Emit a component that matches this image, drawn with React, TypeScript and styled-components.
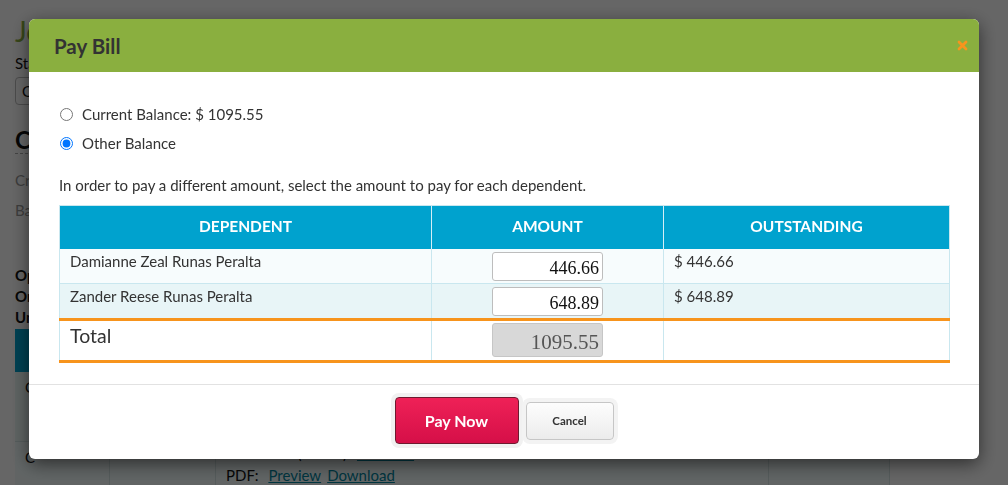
import React from 'react';
import styled, { createGlobalStyle } from 'styled-components';

const Global = createGlobalStyle`
  html, body { margin: 0; padding: 0; background: #fff; }
  body { font-family: Lato, "Open Sans", Arial, sans-serif; color: #333; overflow: hidden; }
  * { box-sizing: border-box; }
`;

/* ---------- background page ---------- */
const Page = styled.div`
  width: 1008px;
  height: 485px;
  overflow: hidden;
  padding: 14px 0 0 15px;
`;
const PageTitle = styled.h1`
  margin: 0;
  font-size: 28px;
  line-height: 34px;
  font-weight: 400;
  color: #8aaf3f;
`;
const FieldLabel = styled.div`
  margin-top: 5px;
  font-size: 15px;
  line-height: 20px;
  color: #111;
`;
const FakeSelect = styled.div`
  margin-top: 4px;
  width: 220px;
  height: 28px;
  border: 1px solid #bbb;
  border-radius: 4px;
  padding: 0 6px;
  font-size: 15px;
  line-height: 26px;
  color: #111;
`;
const SectionTitle = styled.h2`
  margin: 21px 0 0;
  width: 420px;
  font-size: 24px;
  line-height: 27px;
  font-weight: 700;
  color: #111;
  border-bottom: 1px dashed #aaa;
`;
const InfoLine = styled.div<{ $muted?: boolean; $gap?: number }>`
  margin-top: ${(p) => p.$gap ?? 0}px;
  font-size: 15px;
  line-height: ${(p) => (p.$muted ? 30 : 21)}px;
  color: ${(p) => (p.$muted ? '#999' : '#111')};
  font-weight: ${(p) => (p.$muted ? 400 : 700)};
`;
const BgTable = styled.div`
  margin-top: 1px;
  width: 875px;
  display: grid;
  grid-template-columns: 95px 106px 553px 121px;
  grid-template-rows: 43px 70px 70px;
`;
const BgHead = styled.div`
  background: #00a2ce;
  border-right: 1px solid #5cc6e4;
`;
const BgCell = styled.div<{ $alt?: boolean; $tall?: boolean }>`
  background: ${(p) => (p.$alt ? '#f2fbfb' : '#edf9f7')};
  border-right: 1px solid #d6e6e6;
  border-bottom: 1px solid #d6e6e6;
  padding: ${(p) => (p.$tall ? '0 10px' : '6px 10px')};
  font-size: 15px;
  line-height: ${(p) => (p.$tall ? 22 : 18)}px;
  color: #111;
`;
const BgLink = styled.a`
  color: #00859f;
  text-decoration: underline;
  margin-left: 6px;
`;

/* ---------- modal ---------- */
const Backdrop = styled.div`
  position: fixed;
  inset: 0;
  background: rgba(0, 0, 0, 0.6);
  display: flex;
  justify-content: center;
  align-items: flex-start;
  padding-top: 19px;
`;
const Modal = styled.div`
  width: 950px;
  background: #fff;
  border-radius: 6px;
  box-shadow: 0 5px 18px rgba(0, 0, 0, 0.55);
  overflow: hidden;
`;
const Header = styled.div`
  height: 53px;
  background: #8aaf3f;
  display: flex;
  align-items: center;
  justify-content: space-between;
  padding: 0 11px 0 25px;
`;
const Title = styled.h3`
  margin: 0;
  font-size: 20.5px;
  font-weight: 700;
  color: #333;
`;
const Close = styled.button`
  border: 0;
  background: none;
  padding: 0;
  width: 11px;
  height: 11px;
  display: flex;
  cursor: pointer;
`;
const Body = styled.div`
  padding: 31px 30px 21px;
`;
const RadioList = styled.div`
  display: flex;
  flex-direction: column;
  gap: 7px;
`;
const RadioRow = styled.label`
  display: flex;
  align-items: center;
  gap: 9px;
  height: 22px;
  font-size: 15px;
  color: #333;
  input { margin: 0 0 0 1px; width: 13px; height: 13px; }
`;
const Note = styled.p`
  margin: 21px 0 10px;
  font-size: 15px;
  line-height: 20px;
  color: #333;
`;
const Table = styled.table`
  width: 890px;
  border-collapse: collapse;
  table-layout: fixed;
  border: 1px solid #c9e7ef;
`;
const Th = styled.th<{ $w: number }>`
  width: ${(p) => p.$w}px;
  height: 43px;
  background: #00a2ce;
  color: #fff;
  font-size: 15.5px;
  font-weight: 700;
  text-transform: uppercase;
  text-align: center;
  border-left: 1px solid #d5eff6;
  border-top: 1px solid #c9e7ef;
  padding: 0 0 3px;
  &:first-child { border-left: 0; }
`;
const Tr = styled.tr<{ $bg: string }>`
  background: ${(p) => p.$bg};
  height: 35px;
  border-bottom: 1px solid #c9e7ef;
`;
const TotalTr = styled.tr`
  background: #fff;
  height: 42px;
  border-top: 3px solid #f7941d;
  border-bottom: 3px solid #f7941d;
`;
const Td = styled.td<{ $center?: boolean; $total?: boolean }>`
  vertical-align: top;
  padding: ${(p) => (p.$center ? '2px 10px' : p.$total ? '3px 10px' : '3px 10px')};
  text-align: ${(p) => (p.$center ? 'center' : 'left')};
  border-left: 1px solid #c9e7ef;
  font-size: ${(p) => (p.$total ? '19.5px' : '15px')};
  line-height: ${(p) => (p.$total ? '24px' : '18px')};
  color: #333;
  &:first-child { border-left: 0; }
`;
const AmountInput = styled.input<{ $total?: boolean }>`
  width: 111px;
  height: ${(p) => (p.$total ? 34 : 29)}px;
  margin-top: ${(p) => (p.$total ? 0 : 1)}px;
  border: 1px solid ${(p) => (p.$total ? '#c6c6c6' : '#bdbdbd')};
  border-radius: 3px;
  background: ${(p) => (p.$total ? '#d8d8d8' : '#fff')};
  color: ${(p) => (p.$total ? '#555' : '#111')};
  font-family: "Liberation Serif", "DejaVu Serif", serif;
  font-size: ${(p) => (p.$total ? 21 : 18)}px;
  text-align: right;
  padding: 4px 3px 0 4px;
  outline: none;
`;
const Footer = styled.div`
  border-top: 1px solid #e2e2e2;
  padding: 12px 0 15px;
  display: flex;
  justify-content: center;
  align-items: center;
  gap: 7px;
`;
const PayButton = styled.button`
  width: 124px;
  height: 47px;
  border: 1px solid #6d1a2f;
  border-radius: 4px;
  background: linear-gradient(#ef2157, #d50f48);
  box-shadow: 0 0 0 4px #f1f1f1;
  color: #fff;
  font-family: Lato, "Open Sans", Arial, sans-serif;
  font-size: 16px;
  font-weight: 700;
  cursor: pointer;
`;
const CancelButton = styled.button`
  width: 88px;
  height: 38px;
  border: 1px solid #c6c6c6;
  border-radius: 4px;
  background: linear-gradient(#fdfdfd, #ececec);
  box-shadow: 0 0 0 4px #f3f3f3;
  color: #333;
  font-family: Lato, "Open Sans", Arial, sans-serif;
  font-size: 11.5px;
  font-weight: 700;
  cursor: pointer;
`;

const rows = [
  { name: 'Damianne Zeal Runas Peralta', amount: '446.66', bg: '#f7fcfd' },
  { name: 'Zander Reese Runas Peralta', amount: '648.89', bg: '#e8f5f7' },
];

export default function App() {
  return (
    <>
      <Global />
      <Page>
        <PageTitle>Jennifer Runas Peralta</PageTitle>
        <FieldLabel>Status</FieldLabel>
        <FakeSelect>Open</FakeSelect>
        <SectionTitle>Current Bill</SectionTitle>
        <InfoLine $muted $gap={11}>Created: 03/01/2019</InfoLine>
        <InfoLine $muted>Balance: $ 1095.55</InfoLine>
        <InfoLine $gap={40}>Open</InfoLine>
        <InfoLine>Original</InfoLine>
        <InfoLine>Unpaid</InfoLine>
        <BgTable>
          <BgHead />
          <BgHead />
          <BgHead />
          <BgHead />
          <BgCell>C</BgCell>
          <BgCell />
          <BgCell>Statement</BgCell>
          <BgCell />
          <BgCell $alt>C</BgCell>
          <BgCell $alt />
          <BgCell $alt $tall>
            Statement (March) <BgLink>View Bill</BgLink>
            <br />
            PDF: <BgLink>Preview</BgLink>
            <BgLink>Download</BgLink>
          </BgCell>
          <BgCell $alt />
        </BgTable>
      </Page>

      <Backdrop>
        <Modal>
          <Header>
            <Title>Pay Bill</Title>
            <Close aria-label="Close">
              <svg width="11" height="11" viewBox="0 0 11 11">
                <path d="M2 2 L9 9 M9 2 L2 9" stroke="#f7941d" strokeWidth="2.8" strokeLinecap="round" />
              </svg>
            </Close>
          </Header>
          <Body>
            <RadioList>
              <RadioRow>
                <input type="radio" name="bal" />
                Current Balance: $ 1095.55
              </RadioRow>
              <RadioRow>
                <input type="radio" name="bal" defaultChecked />
                Other Balance
              </RadioRow>
            </RadioList>
            <Note>In order to pay a different amount, select the amount to pay for each dependent.</Note>
            <Table>
              <thead>
                <tr>
                  <Th $w={372}>Dependent</Th>
                  <Th $w={232}>Amount</Th>
                  <Th $w={286}>Outstanding</Th>
                </tr>
              </thead>
              <tbody>
                {rows.map((r) => (
                  <Tr key={r.name} $bg={r.bg}>
                    <Td>{r.name}</Td>
                    <Td $center>
                      <AmountInput defaultValue={r.amount} />
                    </Td>
                    <Td>$ {r.amount}</Td>
                  </Tr>
                ))}
                <TotalTr>
                  <Td $total>Total</Td>
                  <Td $center>
                    <AmountInput $total readOnly value="1095.55" />
                  </Td>
                  <Td />
                </TotalTr>
              </tbody>
            </Table>
          </Body>
          <Footer>
            <PayButton>Pay Now</PayButton>
            <CancelButton>Cancel</CancelButton>
          </Footer>
        </Modal>
      </Backdrop>
    </>
  );
}
